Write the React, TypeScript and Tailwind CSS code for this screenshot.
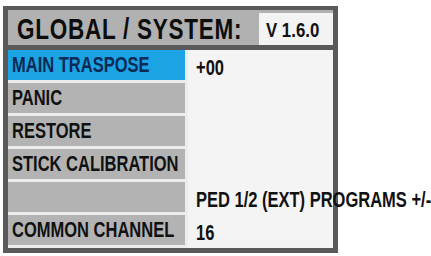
const font = { fontFamily: '"Liberation Sans", Arial, sans-serif' };

type Row = { label: string; value?: string; active?: boolean };

const rows: Row[] = [
  { label: "MAIN TRASPOSE", value: "+00", active: true },
  { label: "PANIC" },
  { label: "RESTORE" },
  { label: "STICK CALIBRATION" },
  { label: "", value: "PED 1/2 (EXT) PROGRAMS +/-" },
  { label: "COMMON CHANNEL", value: "16" },
];

// condensed look: Liberation Sans squeezed horizontally
function Narrow({ children }: { children: React.ReactNode }) {
  return <span className="inline-block origin-left scale-x-[0.75] whitespace-nowrap">{children}</span>;
}

export default function App() {
  return (
    <div className="w-[431px] h-[256px] bg-white overflow-hidden pt-[6px] pl-[3px]" style={font}>
      <div className="w-[335px] border-x-[5px] border-t-4 border-b-[5px] border-[#5a5a5a] bg-[#ececec]">
        {/* header */}
        <div className="flex h-[40px] border-b-[5px] border-[#5a5a5a] bg-[#b1b1b1]">
          <div className="flex-1 min-w-0 flex items-center pl-[9px] pt-[2px] text-[30px] font-bold text-[#0d0d0d] tracking-[1px] leading-none whitespace-nowrap">
            <Narrow>GLOBAL / SYSTEM:</Narrow>
          </div>
          <div className="w-[74px] shrink-0 mt-[3px] bg-[#f3f3f3] flex items-center pl-[7px] text-[21px] font-bold text-[#111] leading-none">
            <span className="inline-block origin-left scale-x-[0.8] whitespace-nowrap">V 1.6.0</span>
          </div>
        </div>

        {/* rows */}
        <div className="flex flex-col">
          {rows.map((row, i) => (
            <div key={i} className="flex h-[33px]">
              <div
                className={
                  "w-[177px] shrink-0 flex items-center pl-[4px] border-b-[3px] border-[#ececec] text-[22px] font-bold leading-none overflow-visible " +
                  (row.active ? "bg-[#1ba3e4] text-[#0b2a55]" : "bg-[#b3b3b3] text-[#111]")
                }
              >
                <Narrow>{row.label}</Narrow>
              </div>
              <div className="w-[3px] shrink-0 bg-[#ececec]" />
              <div className="flex-1 min-w-0 bg-[#f4f4f4] flex items-center pl-[8px] pt-[2px] text-[22px] font-bold text-[#111] leading-none overflow-visible">
                <Narrow>{row.value}</Narrow>
              </div>
            </div>
          ))}
        </div>
      </div>
    </div>
  );
}
